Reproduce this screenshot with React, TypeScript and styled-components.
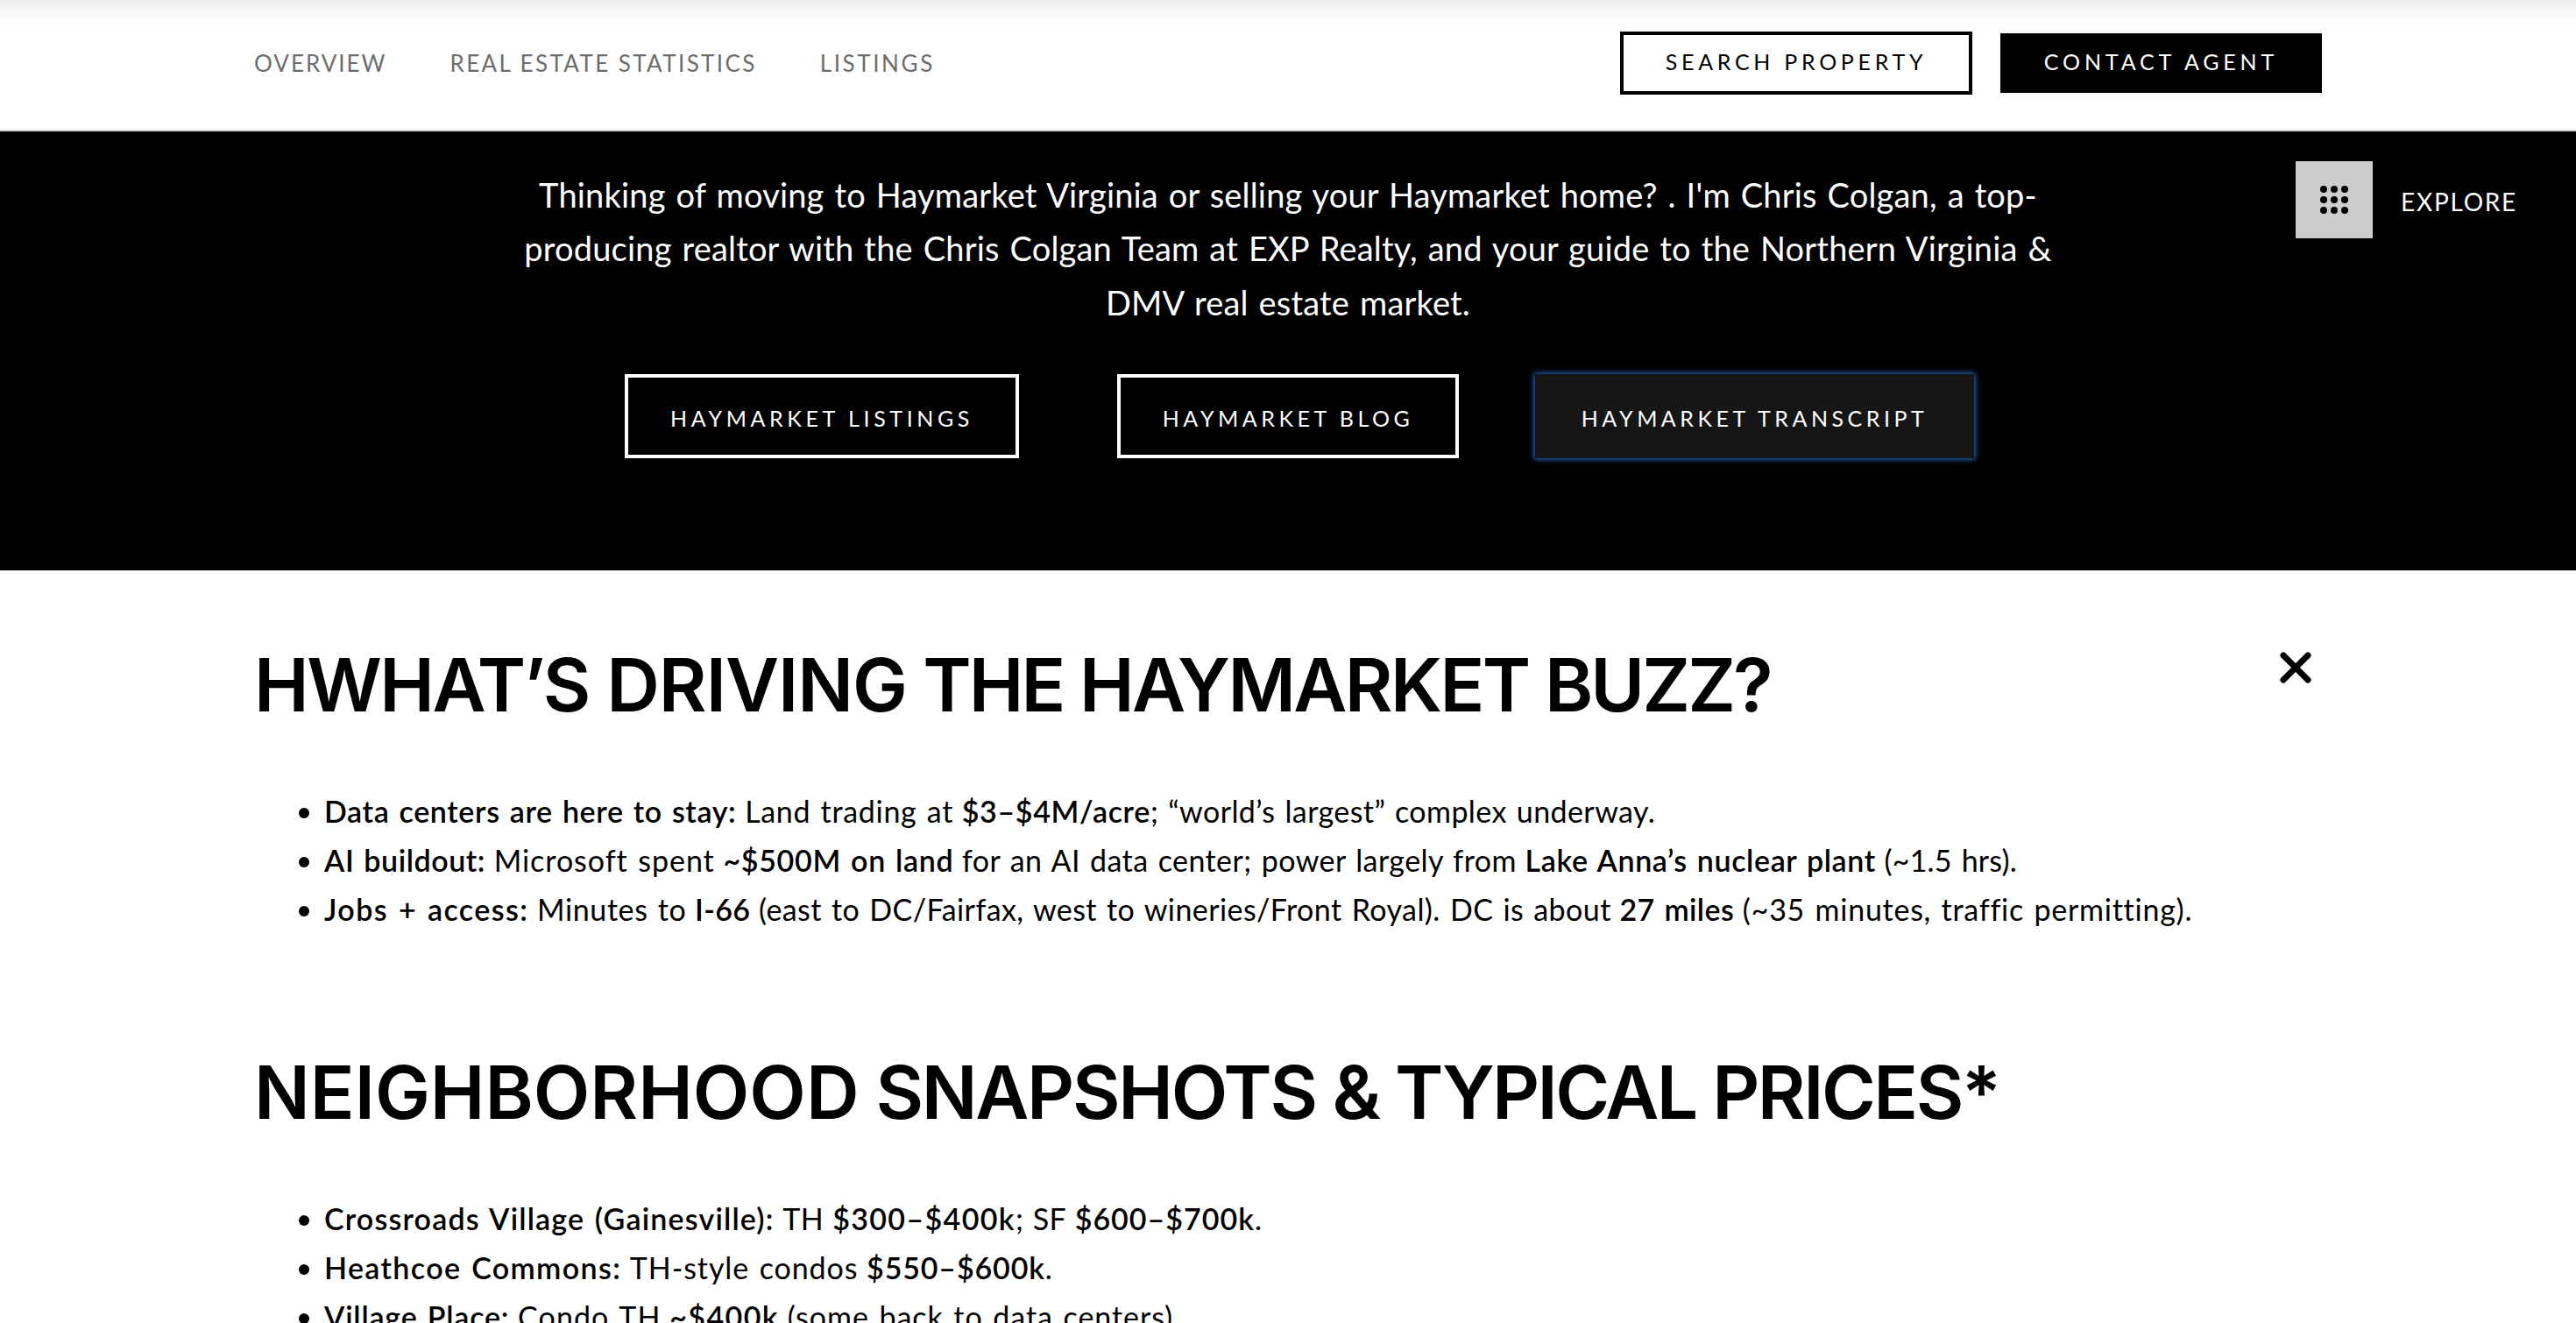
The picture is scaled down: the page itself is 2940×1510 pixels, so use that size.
import styled, {createGlobalStyle, css} from 'styled-components'

const GlobalStyle = createGlobalStyle`
  * {
    box-sizing: border-box;
  }
  html,
  body {
    margin: 0;
    padding: 0;
    overflow: hidden;
    background: #fff;
    color: #000;
    font-family: Lato, 'Noto Sans', sans-serif;
  }
`

const Page = styled.div`
  position: relative;
  width: 100%;
  height: 1510px;
  overflow: hidden;
`

const Header = styled.header`
  display: flex;
  justify-content: space-between;
  align-items: flex-start;
  height: 150px;
  padding: 36px 290px 0;
  border-bottom: 2px solid #d5d5d5;
  background: linear-gradient(#ebebeb, #f5f5f5 9px, #fcfcfc 19px, #fff 28px);
`

const Nav = styled.nav`
  display: flex;
  gap: 72px;
`
const NavLink = styled.a<{$tracking: number}>`
  color: #6d6d6d;
  font-size: 26px;
  line-height: 72px;
  letter-spacing: ${({$tracking}) => $tracking}px;
  white-space: nowrap;
`

const HeaderActions = styled.div`
  display: flex;
  align-items: center;
  gap: 32px;
`

const Button = styled.button<{$width: number; $tracking?: number}>`
  display: flex;
  align-items: center;
  justify-content: center;
  width: ${({$width}) => $width}px;
  padding: 0;
  border: 4px solid #000;
  border-radius: 0;
  background: transparent;
  color: inherit;
  font-family: inherit;
  font-size: 25px;
  letter-spacing: ${({$tracking = 4.7}) => $tracking}px;
  white-space: nowrap;
`
const SearchButton = styled(Button)`
  height: 72px;
  padding-bottom: 4px;
`
const ContactButton = styled(Button)`
  height: 68px;
  padding-bottom: 4px;
  background: #000;
  color: #fff;
`
const HeroButton = styled(Button)<{$focused?: boolean}>`
  height: 96px;
  padding-top: 3px;
  border-color: #fff;

  ${({$focused}) =>
    $focused &&
    css`
      margin-left: -25px;
      border: 0;
      background: #161616;
      box-shadow: 0 0 6px 1px #2c74dc;
    `}
`

const Hero = styled.section`
  height: 501px;
  padding-top: 42px;
  background: #000;
  color: #fff;
`
const HeroText = styled.p`
  margin: 0;
  font-size: 38px;
  line-height: 61.44px;
  letter-spacing: 0.18px;
  word-spacing: 2px;
  text-align: center;
  white-space: nowrap;
`
const HeroActions = styled.div`
  display: flex;
  justify-content: center;
  gap: 112px;
  margin-top: 51px;
  padding-left: 26px;
`

const Explore = styled.div`
  position: absolute;
  top: 184px;
  right: 67px;
  display: flex;
  align-items: center;
  gap: 32px;
  color: #fff;
`
const ExploreIcon = styled.div`
  display: flex;
  align-items: center;
  justify-content: center;
  width: 88px;
  height: 88px;
  background: #ccc;
`
const ExploreLabel = styled.span`
  padding-top: 3px;
  font-size: 28px;
  letter-spacing: 1.74px;
`

const Article = styled.main`
  padding: 81px 290px 0;
`
const ArticleHead = styled.div`
  display: flex;
  justify-content: space-between;
`
const Heading = styled.h2`
  margin: 0;
  font-family: Inter, sans-serif;
  font-size: 84px;
  font-weight: 600;
  line-height: 100px;
  letter-spacing: -2px;
  white-space: nowrap;
`
const Word = styled.span<{$tracking: number}>`
  letter-spacing: ${({$tracking}) => $tracking}px;
`
const CloseButton = styled.button`
  width: 36px;
  height: 36px;
  margin: 12px 12px 0 0;
  padding: 0;
  border: 0;
  background: none;

  svg {
    display: block;
  }
`

const List = styled.ul`
  margin: 66px 0 131px;
  padding: 0 0 0 51px;
  list-style: none;
`
const Item = styled.li`
  display: flex;
  gap: 17px;
  font-size: 34px;
  line-height: 56px;
  white-space: pre;

  &::before {
    content: '';
    width: 12px;
    height: 12px;
    margin-top: 24px;
    border-radius: 50%;
    background: #000;
  }
`
const ItemText = styled.div`
  word-spacing: 1px;
`
const Run = styled.span<{$bold?: boolean; $tracking: number}>`
  font-weight: ${({$bold}) => ($bold ? 600 : 400)};
  letter-spacing: ${({$tracking}) => $tracking}px;
  word-spacing: 2px;
`

type TextRun = {text: string; tracking: number; bold?: boolean}

const b = (text: string, tracking: number): TextRun => ({text, tracking, bold: true})
const r = (text: string, tracking: number): TextRun => ({text, tracking})

const buzzTitle: TextRun[] = [
  r('HWHAT’S', -2.5),
  r('DRIVING', -1),
  r('THE', -2.9),
  r('HAYMARKET', -2.6),
  r('BUZZ?', -2.9),
]
const pricesTitle: TextRun[] = [
  r('NEIGHBORHOOD', 0),
  r('SNAPSHOTS', -2.3),
  r('&', -2.5),
  r('TYPICAL', -2.7),
  r('PRICES*', -2.5),
]

const drivers: TextRun[][] = [
  [
    b('Data centers are here to stay:', 0.65),
    r('Land trading at', 0.68),
    b('$3–$4M/acre', 0.64),
    r('; “world’s largest” complex underway.', 0.4),
  ],
  [
    b('AI buildout:', 0.56),
    r('Microsoft spent', 0.95),
    b('~$500M on land', 0.67),
    r('for an AI data center; power largely from', 0.43),
    b('Lake Anna’s nuclear plant', 0.62),
    r('(~1.5 hrs).', 0.2),
  ],
  [
    b('Jobs + access:', 1.42),
    r('Minutes to', 0.6),
    b('I-66', 0.3),
    r('(east to DC/Fairfax, west to wineries/Front Royal). DC is about', 0.42),
    b('27 miles', 0.37),
    r('(~35 minutes, traffic permitting).', 0.75),
  ],
]

const neighborhoods: TextRun[][] = [
  [
    b('Crossroads Village (Gainesville):', 1.17),
    r('TH', 0.6),
    b('$300–$400k', 1.35),
    r('; SF', 0.2),
    b('$600–$700k', 1.0),
    r('.', 0.9),
  ],
  [
    b('Heathcoe Commons:', 1.36),
    r('TH-style condos', 0.9),
    b('$550–$600k', 0.85),
    r('.', 0.9),
  ],
  [
    b('Village Place:', 0.8),
    r('Condo TH', 1.1),
    b('~$400k', 1.4),
    r('(some back to data centers).', 0.95),
  ],
]

// punctuation sticks to the run before it, everything else gets a space
const needsSpace = (text: string, index: number) => index > 0 && !/^[;.]/.test(text)

const Title = ({words}: {words: TextRun[]}) => (
  <Heading>
    {words.map(({text, tracking}, i) => (
      <Word key={text} $tracking={tracking}>
        {i > 0 && ' '}
        {text}
      </Word>
    ))}
  </Heading>
)

const BulletList = ({items}: {items: TextRun[][]}) => (
  <List>
    {items.map((runs, i) => (
      <Item key={i}>
        <ItemText>
          {runs.map(({text, tracking, bold}, j) => [
            needsSpace(text, j) && ' ',
            <Run key={j} as={bold ? 'strong' : 'span'} $bold={bold} $tracking={tracking}>
              {text}
            </Run>,
          ])}
        </ItemText>
      </Item>
    ))}
  </List>
)

const GridIcon = () => (
  <svg width="32" height="32" viewBox="0 0 32 32">
    {[4, 16, 28].map(y => [4, 16, 28].map(x => <circle key={`${x}-${y}`} cx={x} cy={y} r="4" />))}
  </svg>
)

const App = () => (
  <Page>
    <GlobalStyle />
    <Header>
      <Nav>
        <NavLink $tracking={2}>OVERVIEW</NavLink>
        <NavLink $tracking={2.38}>REAL ESTATE STATISTICS</NavLink>
        <NavLink $tracking={2.6}>LISTINGS</NavLink>
      </Nav>
      <HeaderActions>
        <SearchButton $width={402}>SEARCH PROPERTY</SearchButton>
        <ContactButton $width={367} $tracking={4.86}>
          CONTACT AGENT
        </ContactButton>
      </HeaderActions>
    </Header>

    <Hero>
      <HeroText>
        Thinking of moving to Haymarket Virginia or selling your Haymarket home? . I'm Chris Colgan,
        a top-
        <br />
        producing realtor with the Chris Colgan Team at EXP Realty, and your guide to the Northern
        Virginia &amp;
        <br />
        DMV real estate market.
      </HeroText>
      <HeroActions>
        <HeroButton $width={450} $tracking={4.6}>
          HAYMARKET LISTINGS
        </HeroButton>
        <HeroButton $width={390} $tracking={4.5}>
          HAYMARKET BLOG
        </HeroButton>
        <HeroButton $width={501} $tracking={4.5} $focused>
          HAYMARKET TRANSCRIPT
        </HeroButton>
      </HeroActions>
    </Hero>

    <Explore>
      <ExploreIcon>
        <GridIcon />
      </ExploreIcon>
      <ExploreLabel>EXPLORE</ExploreLabel>
    </Explore>

    <Article>
      <ArticleHead>
        <Title words={buzzTitle} />
        <CloseButton aria-label="Close">
          <svg width="36" height="36" viewBox="0 0 36 36" fill="none">
            <path d="M4 4l28 28M32 4L4 32" stroke="#000" strokeWidth="7" strokeLinecap="round" />
          </svg>
        </CloseButton>
      </ArticleHead>
      <BulletList items={drivers} />
      <Title words={pricesTitle} />
      <BulletList items={neighborhoods} />
    </Article>
  </Page>
)

export default App
